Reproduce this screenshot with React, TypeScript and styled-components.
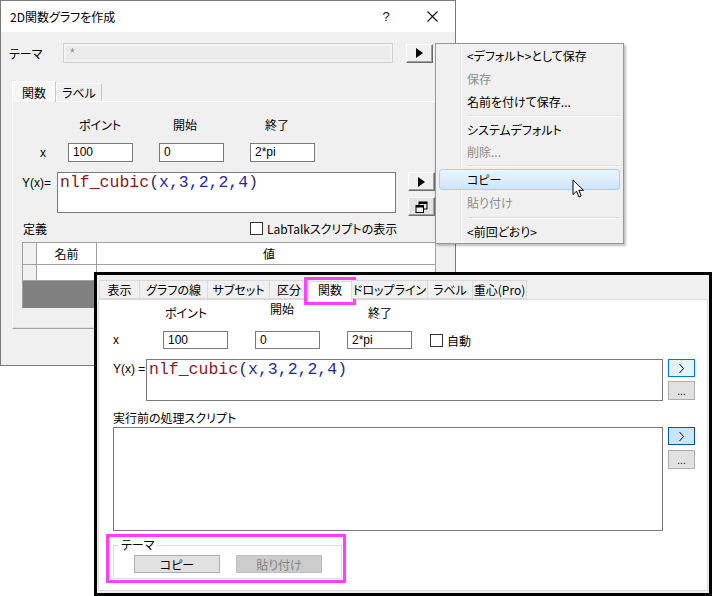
import styled, { createGlobalStyle } from 'styled-components';

const GlobalStyle = createGlobalStyle`
  html, body {
    margin: 0;
    padding: 0;
    background: #fff;
  }
  body {
    font-family: "Noto Sans CJK JP", "Liberation Sans", sans-serif;
    font-size: 12px;
    color: #000;
    font-feature-settings: "palt";
  }
`;

const Desktop = styled.div`
  position: relative;
  width: 712px;
  height: 596px;
  overflow: hidden;
`;

/* ---------- first dialog ---------- */

const Dialog = styled.div`
  position: absolute;
  left: 0;
  top: 0;
  width: 456px;
  height: 366px;
  box-sizing: border-box;
  border: 1px solid #7a7a7a;
  background: #f0f0f0;
  display: flex;
  flex-direction: column;
`;

const TitleBar = styled.div`
  height: 31px;
  background: #fff;
  display: flex;
  align-items: center;
  padding-left: 9px;
`;

const TitleText = styled.div`
  flex: 1;
  font-size: 12px;
`;

const TitleButton = styled.div`
  width: 46px;
  display: flex;
  justify-content: center;
  font-family: "Liberation Sans", sans-serif;
  font-size: 13px;
  color: #111;
`;

const ThemeRow = styled.div`
  display: flex;
  align-items: center;
  margin-top: 11px;
  padding-left: 8px;
  height: 20px;
`;

const ThemeLabel = styled.div`
  width: 54px;
`;

const ThemeField = styled.div`
  width: 330px;
  height: 20px;
  box-sizing: border-box;
  border: 1px solid #cfcfcf;
  box-shadow: inset 0 0 0 2px #f3f3f3;
  background: #ebebeb;
  color: #8a8a8a;
  padding: 1px 6px;
  line-height: 16px;
  font-family: "Liberation Sans", sans-serif;
`;

const ClassicButton = styled.div<{ $pressed?: boolean }>`
  width: 27px;
  height: 19px;
  box-sizing: border-box;
  display: flex;
  align-items: center;
  justify-content: center;
  background: ${p => (p.$pressed ? '#e3e3e3' : '#f0f0f0')};
  border-top: 1px solid #fff;
  border-left: 1px solid #fff;
  border-right: 1px solid #6d6d6d;
  border-bottom: 1px solid #6d6d6d;
  box-shadow: inset -1px -1px 0 #a0a0a0;
`;

const ThemeButton = styled(ClassicButton)`
  margin-left: 13px;
`;

const TabStrip = styled.div`
  display: flex;
  align-items: flex-end;
  margin-top: 17px;
  margin-left: 11px;
  height: 21px;
`;

const ClassicTab = styled.div<{ $active?: boolean }>`
  height: ${p => (p.$active ? '21px' : '18px')};
  box-sizing: border-box;
  padding: 0 ${p => (p.$active ? '9px' : '5px')};
  display: flex;
  align-items: center;
  background: ${p => (p.$active ? '#f7f7f7' : '#f0f0f0')};
  border-left: 1px solid #fff;
  border-top: 1px solid #fff;
  border-right: 1px solid #c8c8c8;
  margin-bottom: ${p => (p.$active ? '-1px' : '0')};
  position: relative;
  z-index: ${p => (p.$active ? 1 : 0)};
`;

const ClassicPanel = styled.div`
  margin-left: 11px;
  width: 424px;
  height: 228px;
  box-sizing: border-box;
  border-left: 1px solid #fff;
  border-top: 1px solid #fff;
  border-right: 1px solid #a0a0a0;
  border-bottom: 1px solid #a0a0a0;
  box-shadow: inset -1px -1px 0 #e3e3e3;
  padding: 14px 0 0 9px;
  overflow: hidden;
`;

const ParamGrid = styled.div<{ $label: number; $gap: number }>`
  display: grid;
  grid-template-columns: ${p => p.$label}px 65px 65px 65px auto;
  column-gap: ${p => p.$gap}px;
  row-gap: 9px;
  align-items: center;
`;

const ColHead = styled.div<{ $indent: number; $lift?: number }>`
  padding-left: ${p => p.$indent}px;
  height: 18px;
  line-height: 18px;
  transform: translateY(${p => -(p.$lift || 0)}px);
  white-space: nowrap;
`;

const AxisLabel = styled.div<{ $indent: number }>`
  padding-left: ${p => p.$indent}px;
  font-family: "Liberation Sans", sans-serif;
  font-size: 12px;
`;

const Field = styled.div<{ $h?: number }>`
  height: ${p => p.$h || 19}px;
  box-sizing: border-box;
  border: 1px solid #7a7a7a;
  background: #fff;
  padding: 0 4px;
  line-height: ${p => (p.$h || 19) - 2}px;
  font-family: "Liberation Sans", sans-serif;
  font-size: 12px;
`;

const ExprRow = styled.div<{ $top: number }>`
  display: flex;
  align-items: flex-start;
  margin-top: ${p => p.$top}px;
`;

const ExprLabel = styled.div<{ $w: number; $pad: number }>`
  width: ${p => p.$w}px;
  padding-top: ${p => p.$pad}px;
  font-family: "Liberation Sans", sans-serif;
  font-size: 12px;
  white-space: nowrap;
`;

const CodeBox = styled.div<{ $w: number; $h: number }>`
  width: ${p => p.$w}px;
  height: ${p => p.$h}px;
  box-sizing: border-box;
  border: 1px solid #7a7a7a;
  background: #fff;
  padding: 1px 2px;
  font-family: "Liberation Mono", monospace;
  font-size: 16.5px;
  line-height: 18px;
  white-space: pre;
`;

const Fn = styled.span`
  color: #8c1a1a;
`;

const Arg = styled.span`
  color: #1f2a9e;
`;

const Paren = styled.span`
  color: #2c2c60;
`;

const SideButtons = styled.div<{ $left: number; $gap: number }>`
  display: flex;
  flex-direction: column;
  gap: ${p => p.$gap}px;
  margin-left: ${p => p.$left}px;
`;

const DefRow = styled.div`
  display: flex;
  align-items: center;
  margin-top: 5px;
  height: 14px;
  padding-left: 1px;
`;

const DefLabel = styled.div`
  width: 227px;
`;

const Check = styled.div`
  width: 13px;
  height: 13px;
  box-sizing: border-box;
  border: 1px solid #333;
  background: #fff;
  margin-right: 4px;
`;

const Table = styled.div`
  margin-top: 7px;
  width: 420px;
  height: 66px;
  box-sizing: border-box;
  border-left: 1px solid #a0a0a0;
  border-top: 1px solid #a0a0a0;
  background: #808080;
  display: grid;
  grid-template-columns: 14px 60px 1fr;
  grid-template-rows: 22px 16px;
`;

const Cell = styled.div<{ $gutter?: boolean }>`
  box-sizing: border-box;
  background: ${p => (p.$gutter ? '#f0f0f0' : '#fff')};
  border-right: 1px solid #a0a0a0;
  border-bottom: 1px solid #a0a0a0;
  display: flex;
  align-items: center;
  justify-content: center;
`;

/* ---------- context menu ---------- */

const Menu = styled.div`
  position: absolute;
  left: 435px;
  top: 43px;
  width: 189px;
  height: 201px;
  box-sizing: border-box;
  border: 1px solid #979797;
  background: #f0f0f0;
  box-shadow: 2px 2px 2px rgba(0, 0, 0, 0.25);
  padding: 0 2px;
  display: flex;
  flex-direction: column;
`;

const Gutter = styled.div`
  position: absolute;
  left: 24px;
  top: 1px;
  bottom: 1px;
  width: 1px;
  background: #e2e3e3;
  box-shadow: 1px 0 0 #fff;
`;

const MenuItem = styled.div<{ $disabled?: boolean; $hot?: boolean }>`
  position: relative;
  height: 23px;
  display: flex;
  align-items: center;
  padding-left: 29px;
  font-size: 12px;
  color: ${p => (p.$disabled ? '#8d8d8d' : '#000')};
  &::before {
    content: '';
    display: ${p => (p.$hot ? 'block' : 'none')};
    position: absolute;
    left: 1px;
    right: 1px;
    top: 1px;
    bottom: 1px;
    border: 1px solid #a9cff3;
    border-radius: 3px;
    background: linear-gradient(#eef5fd, #cfe4f8);
    z-index: 0;
  }
  span {
    position: relative;
    z-index: 1;
  }
`;

const MenuSep = styled.div<{ $h: number }>`
  height: ${p => p.$h}px;
  display: flex;
  align-items: center;
  padding-left: 29px;
  &::after {
    content: '';
    flex: 1;
    height: 1px;
    background: #e0e0e0;
    box-shadow: 0 1px 0 #fff;
  }
`;

const Cursor = styled.svg`
  position: absolute;
  left: 572px;
  top: 179px;
`;

/* ---------- second panel ---------- */

const Panel = styled.div`
  position: absolute;
  left: 94px;
  top: 272px;
  width: 618px;
  height: 324px;
  box-sizing: border-box;
  border: 3px solid #000;
  background: #f0f0f0;
  padding: 2px 1px 2px 1px;
  display: flex;
  flex-direction: column;
`;

const FlatTabs = styled.div`
  display: flex;
  align-items: flex-end;
  height: 22px;
  position: relative;
  z-index: 2;
`;

const FlatTab = styled.div<{ $w: number; $active?: boolean }>`
  width: ${p => p.$w}px;
  height: ${p => (p.$active ? '20px' : '19px')};
  box-sizing: border-box;
  display: flex;
  align-items: center;
  justify-content: center;
  background: ${p => (p.$active ? '#fff' : '#f0f0f0')};
  border: 1px solid #d9d9d9;
  border-bottom: ${p => (p.$active ? 'none' : '1px solid #d9d9d9')};
  margin-left: -1px;
  margin-bottom: ${p => (p.$active ? '-2px' : '0')};
  outline: ${p => (p.$active ? '3px solid #ff40ff' : 'none')};
  outline-offset: ${p => (p.$active ? '1px' : '0')};
  white-space: nowrap;
  padding-bottom: ${p => (p.$active ? '4px' : '0')};
  &:first-child {
    margin-left: 1px;
  }
`;

const Pane = styled.div`
  flex: 1;
  background: #fff;
  border: 1px solid #d9d9d9;
  padding: 4px 0 0 14px;
  display: flex;
  flex-direction: column;
`;

const BlueButton = styled.div<{ $strong?: boolean }>`
  width: 27px;
  height: 18px;
  box-sizing: border-box;
  border: 1px solid ${p => (p.$strong ? '#005499' : '#0078d7')};
  background: ${p => (p.$strong ? '#cce4f7' : '#e5f1fb')};
  display: flex;
  align-items: center;
  justify-content: center;
`;

const DotsButton = styled.div`
  width: 27px;
  height: 19px;
  box-sizing: border-box;
  border: 1px solid #adadad;
  background: #e1e1e1;
  display: flex;
  align-items: center;
  justify-content: center;
  font-family: "Liberation Sans", sans-serif;
  font-size: 10px;
  line-height: 10px;
  padding-top: 2px;
`;

const AutoCheck = styled.div`
  display: flex;
  align-items: center;
  margin-left: -9px;
`;

const ScriptLabel = styled.div`
  margin-top: 8px;
  height: 17px;
  line-height: 17px;
`;

const Highlight = styled.div`
  margin-top: 3px;
  margin-left: -7px;
  width: 240px;
  height: 49px;
  box-sizing: border-box;
  border: 3px solid #ff40ff;
  padding: 8px 1px 1px 4px;
`;

const GroupBox = styled.div`
  position: relative;
  width: 229px;
  height: 34px;
  box-sizing: border-box;
  border: 1px solid #dcdcdc;
  display: flex;
  align-items: flex-start;
  gap: 16px;
  padding: 9px 0 0 20px;
`;

const GroupTitle = styled.div`
  position: absolute;
  left: 4px;
  top: -9px;
  padding: 0 3px;
  background: #fff;
  line-height: 16px;
`;

const FlatButton = styled.div<{ $disabled?: boolean }>`
  width: 86px;
  height: 18px;
  box-sizing: border-box;
  border: 1px solid ${p => (p.$disabled ? '#bfbfbf' : '#adadad')};
  background: ${p => (p.$disabled ? '#cccccc' : '#e1e1e1')};
  color: ${p => (p.$disabled ? '#838383' : '#000')};
  display: flex;
  align-items: center;
  justify-content: center;
  font-size: 12px;
`;

function PlayIcon() {
  return (
    <svg width="9" height="10" viewBox="0 0 9 10">
      <path d="M1 0 L8 5 L1 10 Z" fill="#000" />
    </svg>
  );
}

function CloseIcon() {
  return (
    <svg width="11" height="11" viewBox="0 0 11 11">
      <path d="M0.5 0.5 L10.5 10.5 M10.5 0.5 L0.5 10.5" stroke="#111" strokeWidth="1.1" />
    </svg>
  );
}

function RestoreIcon() {
  return (
    <svg width="13" height="12" viewBox="0 0 13 12">
      <rect x="4" y="1" width="8" height="7" fill="none" stroke="#000" strokeWidth="1" />
      <rect x="4" y="1" width="8" height="2" fill="#000" />
      <rect x="1" y="4.5" width="7.5" height="7" fill="#f0f0f0" stroke="#000" strokeWidth="1" />
      <rect x="1" y="4.5" width="7.5" height="2" fill="#000" />
    </svg>
  );
}

function Chevron() {
  return (
    <svg width="7" height="11" viewBox="0 0 7 11">
      <path d="M1.5 1 L5.5 5.5 L1.5 10" fill="none" stroke="#000" strokeWidth="1" />
    </svg>
  );
}

function Code() {
  return (
    <>
      <Fn>nlf_cubic</Fn>
      <Paren>(</Paren>
      <Arg>x,3,2,2,4</Arg>
      <Paren>)</Paren>
    </>
  );
}

export default function App() {
  return (
    <Desktop>
      <GlobalStyle />

      <Dialog>
        <TitleBar>
          <TitleText>2D関数グラフを作成</TitleText>
          <TitleButton>?</TitleButton>
          <TitleButton><CloseIcon /></TitleButton>
        </TitleBar>

        <ThemeRow>
          <ThemeLabel>テーマ</ThemeLabel>
          <ThemeField>*</ThemeField>
          <ThemeButton><PlayIcon /></ThemeButton>
        </ThemeRow>

        <TabStrip>
          <ClassicTab $active>関数</ClassicTab>
          <ClassicTab>ラベル</ClassicTab>
        </TabStrip>

        <ClassicPanel>
          <ParamGrid $label={20} $gap={26}>
            <div />
            <ColHead $indent={11}>ポイント</ColHead>
            <ColHead $indent={14}>開始</ColHead>
            <ColHead $indent={15}>終了</ColHead>
            <div />
            <AxisLabel $indent={18}>x</AxisLabel>
            <Field>100</Field>
            <Field>0</Field>
            <Field>2*pi</Field>
            <div />
          </ParamGrid>

          <ExprRow $top={10}>
            <ExprLabel $w={35} $pad={4}>Y(x)=</ExprLabel>
            <CodeBox $w={339} $h={41}><Code /></CodeBox>
            <SideButtons $left={12} $gap={6}>
              <ClassicButton><PlayIcon /></ClassicButton>
              <ClassicButton $pressed><RestoreIcon /></ClassicButton>
            </SideButtons>
          </ExprRow>

          <DefRow>
            <DefLabel>定義</DefLabel>
            <Check />
            <span>LabTalkスクリプトの表示</span>
          </DefRow>

          <Table>
            <Cell $gutter />
            <Cell>名前</Cell>
            <Cell>値</Cell>
            <Cell $gutter />
            <Cell />
            <Cell />
          </Table>
        </ClassicPanel>
      </Dialog>

      <Menu>
        <Gutter />
        <MenuItem><span>&lt;デフォルト&gt;として保存</span></MenuItem>
        <MenuItem $disabled><span>保存</span></MenuItem>
        <MenuItem><span>名前を付けて保存...</span></MenuItem>
        <MenuSep $h={5} />
        <MenuItem><span>システムデフォルト</span></MenuItem>
        <MenuItem $disabled><span>削除...</span></MenuItem>
        <MenuSep $h={5} />
        <MenuItem $hot><span>コピー</span></MenuItem>
        <MenuItem $disabled><span>貼り付け</span></MenuItem>
        <MenuSep $h={6} />
        <MenuItem><span>&lt;前回どおり&gt;</span></MenuItem>
      </Menu>

      <Cursor width="13" height="20" viewBox="0 0 13 20">
        <path
          d="M1 1 L1 15.5 L4.5 12.2 L7 18 L9.2 17 L6.8 11.3 L11.5 11.3 Z"
          fill="#fff"
          stroke="#000"
          strokeWidth="1"
          strokeLinejoin="miter"
        />
      </Cursor>

      <Panel>
        <FlatTabs>
          <FlatTab $w={41}>表示</FlatTab>
          <FlatTab $w={69}>グラフの線</FlatTab>
          <FlatTab $w={63}>サブセット</FlatTab>
          <FlatTab $w={40}>区分</FlatTab>
          <FlatTab $w={44} $active>関数</FlatTab>
          <FlatTab $w={77}>ドロップライン</FlatTab>
          <FlatTab $w={46}>ラベル</FlatTab>
          <FlatTab $w={55}>重心(Pro)</FlatTab>
        </FlatTabs>

        <Pane>
          <ParamGrid $label={23} $gap={27}>
            <div />
            <ColHead $indent={2}>ポイント</ColHead>
            <ColHead $indent={15} $lift={4}>開始</ColHead>
            <ColHead $indent={21}>終了</ColHead>
            <div />
            <AxisLabel $indent={0}>x</AxisLabel>
            <Field $h={18}>100</Field>
            <Field $h={18}>0</Field>
            <Field $h={18}>2*pi</Field>
            <AutoCheck>
              <Check />
              <span>自動</span>
            </AutoCheck>
          </ParamGrid>

          <ExprRow $top={10}>
            <ExprLabel $w={33} $pad={3}>Y(x) =</ExprLabel>
            <CodeBox $w={517} $h={42}><Code /></CodeBox>
            <SideButtons $left={5} $gap={4}>
              <BlueButton><Chevron /></BlueButton>
              <DotsButton>...</DotsButton>
            </SideButtons>
          </ExprRow>

          <ScriptLabel>実行前の処理スクリプト</ScriptLabel>

          <ExprRow $top={1}>
            <CodeBox $w={550} $h={104} />
            <SideButtons $left={5} $gap={5}>
              <BlueButton $strong><Chevron /></BlueButton>
              <DotsButton>...</DotsButton>
            </SideButtons>
          </ExprRow>

          <Highlight>
            <GroupBox>
              <GroupTitle>テーマ</GroupTitle>
              <FlatButton>コピー</FlatButton>
              <FlatButton $disabled>貼り付け</FlatButton>
            </GroupBox>
          </Highlight>
        </Pane>
      </Panel>
    </Desktop>
  );
}
